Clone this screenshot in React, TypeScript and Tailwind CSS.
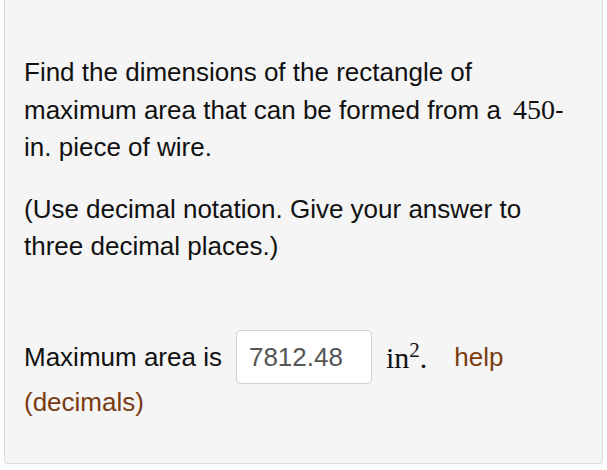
import React from "react";

const serif = { fontFamily: '"Liberation Serif", "Times New Roman", serif' };

export default function App() {
  return (
    <div className="w-[607px] h-[470px] bg-white overflow-hidden" style={{ fontFamily: '"Liberation Sans", Arial, sans-serif' }}>
      <div className="mx-[4px] h-[464px] bg-[#f5f5f5] border-x border-b border-[#dcdcdc] rounded-b-[4px] pl-[19px] pr-[22px] pt-[54px] text-[26px] leading-[37px] text-[#111]">
        <p>
          Find the dimensions of the rectangle of maximum area that can be formed from a{" "}
          <span className="ml-[5px] text-[28px]" style={serif}>450</span>-{"in. piece of wire."}
        </p>
        <p className="mt-[25px]">
          (Use decimal notation. Give your answer to three decimal places.)
        </p>
        <div className="mt-[65px] flex items-center h-[54px]">
          <span>Maximum area is</span>
          <div className="ml-[14px] w-[136px] h-[54px] bg-white border border-[#cfcfcf] rounded-[5px] flex items-center pl-[12px] text-[#555]">
            7812.48
          </div>
          <span className="ml-[14px] text-[30px]" style={serif}>
            in<sup className="text-[21px]">2</sup>.
          </span>
          <span className="ml-[27px] text-[#7a3b10]">help</span>
        </div>
        <div className="text-[#7a3b10]">(decimals)</div>
      </div>
    </div>
  );
}
